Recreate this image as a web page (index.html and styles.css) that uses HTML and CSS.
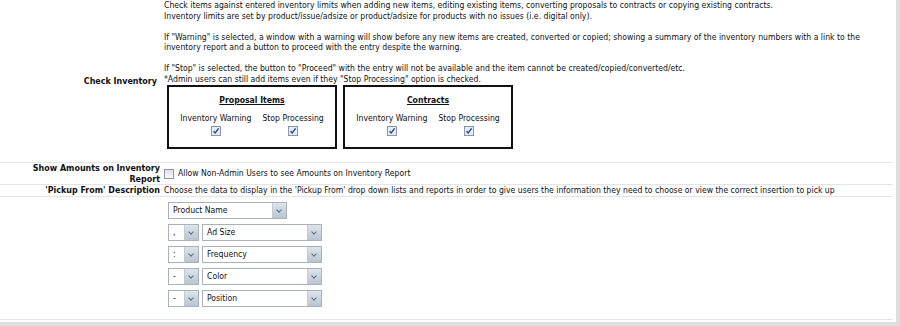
FILE: index.html
```html
<!DOCTYPE html>
<html>
  <head>
    <title>Inventory Settings</title>
    <meta name="viewport" content="width=device-width, initial-scale=1" />
    <link rel="stylesheet" href="styles.css">
  </head>
  <body>
    <div class="panel">
      <div class="row row-inventory">
        <div class="label">Check Inventory</div>
        <div class="value">
          <p class="note">
            Check items against entered inventory limits when adding new items, editing existing items, converting proposals to contracts or copying existing contracts.<br>
            Inventory limits are set by product/issue/adsize or product/adsize for products with no issues (i.e. digital only).<br>
            <br>
            If "Warning" is selected, a window with a warning will show before any new items are created, converted or copied; showing a summary of the inventory numbers with a link to the<br>
            inventory report and a button to proceed with the entry despite the warning.<br>
            <br>
            If "Stop" is selected, the button to "Proceed" with the entry will not be available and the item cannot be created/copied/converted/etc.<br>
            *Admin users can still add items even if they "Stop Processing" option is checked.
          </p>
          <div class="boxes">
            <div class="box">
              <div class="box-title">Proposal Items</div>
              <div class="box-cols">
                <div class="opt"><span>Inventory Warning</span><span class="cb checked"></span></div>
                <div class="opt"><span>Stop Processing</span><span class="cb checked"></span></div>
              </div>
            </div>
            <div class="box">
              <div class="box-title">Contracts</div>
              <div class="box-cols">
                <div class="opt"><span>Inventory Warning</span><span class="cb checked"></span></div>
                <div class="opt"><span>Stop Processing</span><span class="cb checked"></span></div>
              </div>
            </div>
          </div>
        </div>
      </div>

      <div class="row">
        <div class="label">Show Amounts on Inventory<br>Report</div>
        <div class="value inline">
          <span class="cb"></span>
          <span>Allow Non-Admin Users to see Amounts on Inventory Report</span>
        </div>
      </div>

      <div class="row">
        <div class="label">'Pickup From' Description</div>
        <div class="value">Choose the data to display in the 'Pickup From' drop down lists and reports in order to give users the information they need to choose or view the correct insertion to pick up</div>
      </div>

      <div class="row">
        <div class="label"></div>
        <div class="value selects">
          <div class="sel-row">
            <div class="sel wide">Product Name</div>
          </div>
          <div class="sel-row">
            <div class="sel sep">,</div>
            <div class="sel field">Ad Size</div>
          </div>
          <div class="sel-row">
            <div class="sel sep">:</div>
            <div class="sel field">Frequency</div>
          </div>
          <div class="sel-row">
            <div class="sel sep">-</div>
            <div class="sel field">Color</div>
          </div>
          <div class="sel-row">
            <div class="sel sep">-</div>
            <div class="sel field">Position</div>
          </div>
        </div>
      </div>
    </div>
  </body>
</html>
```

FILE: styles.css
```css
body {
  margin: 0;
  padding: 0;
  background: #dedede;
  font-family: "DejaVu Sans Condensed", "DejaVu Sans", sans-serif;
  font-size: 8.6px;
  line-height: 10.5px;
  color: #111;
}

.panel {
  width: 896px;
  height: 322px;
  background: #fff;
}

.row {
  display: grid;
  grid-template-columns: 160px 1fr;
  column-gap: 4px;
  align-items: center;
  width: 893px;
  border-bottom: 1px solid #e4e4e4;
}

.label {
  text-align: right;
  font-weight: bold;
  font-size: 8.9px;
  color: #111;
}

.row-inventory .label {
  padding-right: 3px;
}

.value {
  white-space: nowrap;
}

.note {
  margin: 0;
}

.inline {
  display: flex;
  align-items: center;
  gap: 4px;
}

.boxes {
  display: flex;
  gap: 6px;
  margin: 1px 0 13px 3px;
}

.box {
  width: 166px;
  height: 60px;
  border: 2px solid #111;
  display: flex;
  flex-direction: column;
  align-items: center;
}

.box-title {
  font-weight: bold;
  text-decoration: underline;
  margin-top: 8px;
}

.box-cols {
  display: flex;
  gap: 11px;
  margin-top: 7px;
}

.opt {
  display: flex;
  flex-direction: column;
  align-items: center;
  gap: 3px;
}

.cb {
  display: inline-block;
  box-sizing: border-box;
  width: 10px;
  height: 10px;
  border: 1px solid #8d97a3;
  background: linear-gradient(#dfe3e8, #f7f8fa);
}

.cb.checked {
  background: #e4ebf3 url("data:image/svg+xml;utf8,<svg xmlns='http://www.w3.org/2000/svg' width='8' height='8' viewBox='0 0 8 8'><path d='M1.5 4.2 L3.2 6 L6.6 1.4' fill='none' stroke='%23264d8c' stroke-width='1.4'/></svg>") center no-repeat;
}

.selects {
  padding: 5px 0 12px 4px;
}

.sel-row {
  display: flex;
  gap: 3px;
  margin-bottom: 5px;
}

.sel-row:last-child {
  margin-bottom: 0;
}

.sel {
  position: relative;
  box-sizing: border-box;
  height: 17px;
  line-height: 15px;
  padding-left: 4px;
  border: 1px solid #aab1b9;
  background: #fff;
}

.sel::after {
  content: "";
  position: absolute;
  top: 0;
  right: 0;
  width: 13px;
  height: 15px;
  border-left: 1px solid #c3cad2;
  background: linear-gradient(#dde4eb, #b9c5d1);
}

.sel::before {
  content: "";
  position: absolute;
  z-index: 1;
  top: 5px;
  right: 5px;
  width: 3px;
  height: 3px;
  border-right: 1px solid #5e6d7e;
  border-bottom: 1px solid #5e6d7e;
  transform: rotate(45deg);
}

.wide {
  width: 119px;
}

.sep {
  width: 31px;
}

.field {
  width: 120px;
}
```
